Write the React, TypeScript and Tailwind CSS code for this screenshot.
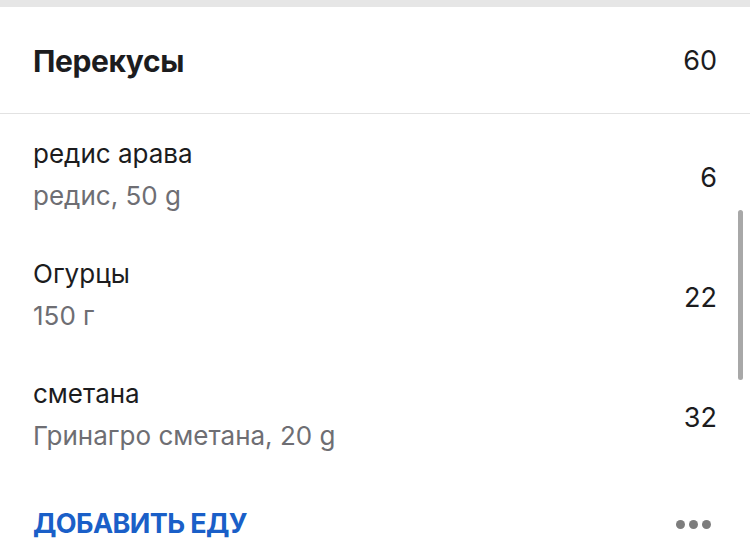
const items = [
  { name: "редис арава", detail: "редис, 50 g", kcal: 6 },
  { name: "Огурцы", detail: "150 г", kcal: 22 },
  { name: "сметана", detail: "Гринагро сметана, 20 g", kcal: 32 },
];

export default function App() {
  return (
    <div className="relative h-[560px] w-[750px] overflow-hidden bg-white font-['Inter',sans-serif] text-[#1c1c1e]">
      <div className="h-[7px] bg-[#e6e6e6]" />

      <div className="flex h-[107px] items-center justify-between border-b border-[#e2e2e2] pl-[33px] pr-[33px] pt-[2px]">
        <h1 className="text-[30px] font-bold tracking-[-0.4px]">Перекусы</h1>
        <span className="text-[27px]">60</span>
      </div>

      <div className="pl-[33px] pr-[33px]">
        {items.map((item) => (
          <div key={item.name} className="flex h-[120px] items-center justify-between pt-[2px]">
            <div className="flex flex-col gap-[10px]">
              <span className="text-[26px] leading-[32px]">{item.name}</span>
              <span className="text-[26px] leading-[32px] text-[#6e6e73]">{item.detail}</span>
            </div>
            <span className="pt-[6px] text-[27px]">{item.kcal}</span>
          </div>
        ))}

        <div className="flex h-[100px] items-center justify-between">
          <span className="text-[27px] font-bold tracking-[-0.6px] text-[#1a5fc8]">ДОБАВИТЬ ЕДУ</span>
          <div className="flex gap-[4px] pr-[6px]">
            <span className="h-[9px] w-[9px] rounded-full bg-[#7d7d7d]" />
            <span className="h-[9px] w-[9px] rounded-full bg-[#7d7d7d]" />
            <span className="h-[9px] w-[9px] rounded-full bg-[#7d7d7d]" />
          </div>
        </div>
      </div>

      <div className="absolute right-[7px] top-[210px] h-[170px] w-[5px] rounded-full bg-[#a8a8a8]" />
    </div>
  );
}
